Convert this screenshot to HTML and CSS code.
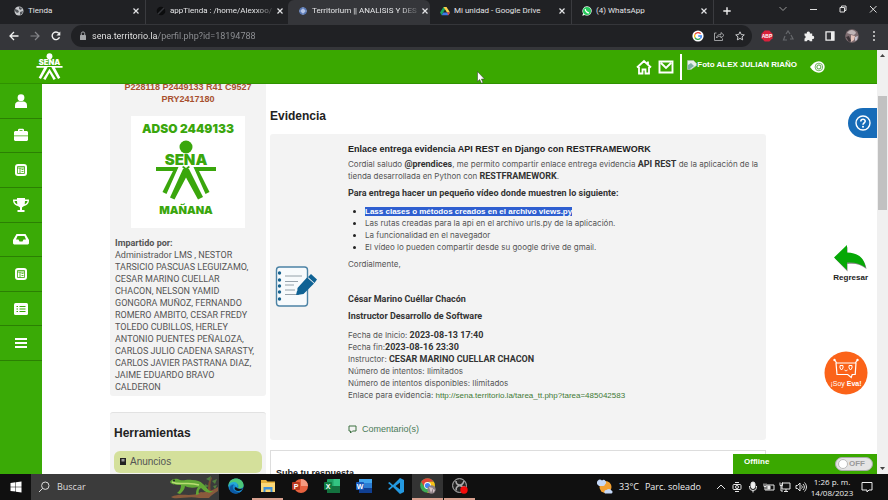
FILE: index.html
```html
<!DOCTYPE html>
<html lang="es">
<head>
<meta charset="utf-8">
<title>Territorium || ANALISIS Y DESARROLLO</title>
<link rel="stylesheet" href="styles.css">
</head>
<body>
<svg class="defs" aria-hidden="true">
  <symbol id="x" viewBox="0 0 8 8"><path d="M1.5 1.5l5 5M6.500 1.500l-5 5" stroke="currentColor" stroke-width="1.200" fill="none"/></symbol>
  <symbol id="news" viewBox="0 0 12 12"><rect width="12" height="12" rx="3" fill="#fff"/><path d="M2.500 2.500h7v7h-7zM2.500 4h7M5 4v5.500M6.500 5.500h2M6.500 7.500h2" fill="none" stroke="#3aaa06" stroke-width=".8"/></symbol>
</svg>

<header class="tabs">
  <div class="tab">
    <svg class="fav" viewBox="0 0 10 10"><circle cx="5" cy="5" r="4.500" fill="#c6c8cb"/><path d="M1 3l3 1 1 2-2 1-2-2zM5 1l3 1-1 2-2-1zM6 6l3-1-1 3-2 1z" fill="#55585d"/></svg>
    <span class="tab-name">Tienda</span>
    <button class="shut" aria-label="Cerrar"><svg viewBox="0 0 8 8"><use href="#x"/></svg></button>
  </div>
  <div class="tab">
    <svg class="fav" viewBox="0 0 10 10"><circle cx="5" cy="5" r="4.300" fill="#0c0d0e"/><path d="M2 8L8 2" stroke="#35373b" stroke-width="1.500"/></svg>
    <span class="tab-name fade">appTienda : /home/Alexxoo/</span>
    <button class="shut" aria-label="Cerrar"><svg viewBox="0 0 8 8"><use href="#x"/></svg></button>
  </div>
  <div class="tab on">
    <svg class="fav" viewBox="0 0 10 10"><circle cx="5" cy="5" r="3.800" fill="#5878b4"/><circle cx="5" cy="5" r="2" fill="#c9d6f2"/><path d="M1 5h8M5 1v8" stroke="#a9bce2" stroke-width=".7"/></svg>
    <span class="tab-name fade">Territorium || ANALISIS Y DES</span>
    <button class="shut" aria-label="Cerrar"><svg viewBox="0 0 8 8"><use href="#x"/></svg></button>
  </div>
  <div class="tab">
    <svg class="fav" viewBox="0 0 10 10"><path d="M3.500 1h3L3.200 6.500 1.700 9.200 0 6.500z" fill="#1aa260"/><path d="M3.500 1h3L10 6.500H7z" fill="#ffcf48"/><path d="M3.200 6.500H10L8.300 9.200H1.700z" fill="#3b78e7"/><path d="M7 6.500h3L8.300 9.200z" fill="#ea4335"/></svg>
    <span class="tab-name">Mi unidad - Google Drive</span>
    <button class="shut" aria-label="Cerrar"><svg viewBox="0 0 8 8"><use href="#x"/></svg></button>
  </div>
  <div class="tab">
    <svg class="fav" viewBox="0 0 12 12"><path d="M6 .3a5.600 5.600 0 1 1-2.700 10.500L.4 11.700l.9-2.900A5.600 5.600 0 0 1 6 .3z" fill="#fff"/><circle cx="6" cy="6" r="4.800" fill="#25c85a"/><path d="M4 3.500c-.6 1.800 2.200 5 4.500 4.700" stroke="#fff" stroke-width="1.500" fill="none"/></svg>
    <span class="tab-name">(4) WhatsApp</span>
    <button class="shut" aria-label="Cerrar"><svg viewBox="0 0 8 8"><use href="#x"/></svg></button>
  </div>
  <button class="new" aria-label="Nueva pestaña"><svg viewBox="0 0 8 8"><path d="M4 .3v7.400M.3 4h7.400" stroke="#eee" stroke-width="1.400"/></svg></button>
  <div class="win">
    <button aria-label="Buscar pestañas"><svg viewBox="0 0 10 10"><path d="M1.500 3l3.500 3.500L8.500 3" stroke="#999" fill="none"/></svg></button>
    <button aria-label="Minimizar"><svg viewBox="0 0 10 10"><path d="M2 5.500h7" stroke="#ddd"/></svg></button>
    <button aria-label="Restaurar"><svg viewBox="0 0 10 10"><path d="M2 3.500h4.500V8H2zM3.500 3.500V2H8v4.500H6.500" stroke="#ddd" fill="none"/></svg></button>
    <button aria-label="Cerrar ventana"><svg viewBox="0 0 10 10"><path d="M2 2l6.500 6.500M8.500 2L2 8.500" stroke="#ddd" fill="none"/></svg></button>
  </div>
</header>

<div class="toolbar">
  <button aria-label="Atrás"><svg viewBox="0 0 10 10"><path d="M9.500 5H1M5 1L1 5l4 4" stroke="#f1f1f1" stroke-width="1.300" fill="none"/></svg></button>
  <button aria-label="Adelante"><svg viewBox="0 0 10 10"><path d="M.5 5H9M5 1l4 4-4 4" stroke="#85868a" stroke-width="1.200" fill="none"/></svg></button>
  <button aria-label="Recargar"><svg viewBox="0 0 10 10"><path d="M8.500 6.200A3.800 3.800 0 1 1 7.800 2.300" stroke="#f1f1f1" stroke-width="1.400" fill="none"/><path d="M9.300.4v4H5.400z" fill="#f1f1f1"/></svg></button>
  <div class="address">
    <svg class="lock" viewBox="0 0 8 10"><rect x="1" y="4" width="6" height="5" rx=".6" fill="#a4a6a9"/><path d="M2.300 4V2.600a1.700 1.700 0 0 1 3.400 0V4" fill="none" stroke="#a4a6a9"/></svg>
    <input type="text" aria-label="Dirección" value="sena.territorio.la/perfil.php?id=18194788">
    <button aria-label="Buscar con Google"><svg viewBox="0 0 12 12"><circle cx="6" cy="6" r="5.600" fill="#fff"/><path d="M8.600 3.700A3.400 3.400 0 0 0 3 4.400" stroke="#ea4335" stroke-width="1.300" fill="none"/><path d="M3 4.400a3.400 3.400 0 0 0 0 3.200" stroke="#fbbc05" stroke-width="1.300" fill="none"/><path d="M3 7.600a3.400 3.400 0 0 0 5.300.9" stroke="#34a853" stroke-width="1.300" fill="none"/><path d="M8.300 8.500A3.400 3.400 0 0 0 9.400 6H6.200" stroke="#4285f4" stroke-width="1.300" fill="none"/></svg></button>
    <button aria-label="Compartir"><svg viewBox="0 0 12 12"><path d="M3.500 3H1.500v7.500h8V8.500M3.500 8c.3-2.600 2-3.600 4.500-3.600V2.500L11 5.300 8 8V6.200C6 6.200 4.500 6.600 3.500 8z" stroke="#aaabae" stroke-width=".9" fill="none"/></svg></button>
    <button aria-label="Favorito"><svg viewBox="0 0 12 12"><path d="M6 1.800l1.300 2.800 3 .3-2.300 2 .7 3L6 8.400 3.300 9.900l.7-3-2.300-2 3-.3z" stroke="#c9cacc" fill="none"/></svg></button>
  </div>
  <div class="exts">
    <button aria-label="Adblock Plus"><svg viewBox="0 0 12 12"><path d="M3.700.6h4.600l3.200 3.200v4.500l-3.200 3.200H3.700L.5 8.300V3.800z" fill="#d9213c"/><text x="6" y="7.700" class="abp">ABP</text></svg></button>
    <button aria-label="Extensión"><svg viewBox="0 0 12 12"><path d="M4 4l2-3 2 3M9 5l2 4H8M5 10H1.500L3 6" stroke="#66686c" stroke-width="1.200" fill="none"/></svg></button>
    <button aria-label="Extensiones"><svg viewBox="0 0 12 12"><path d="M1.500 3.500h2.300a1.600 1.600 0 1 1 3.100 0h2.300v2.400a1.600 1.600 0 1 1 0 3.100v2.200H6.800a1.500 1.500 0 0 0-2.900 0H1.500V8.500a1.500 1.500 0 0 0 0-2.900z" fill="#eee"/></svg></button>
    <button aria-label="Panel lateral"><svg viewBox="0 0 12 12"><path d="M2 1.800h8v8.400H2z" fill="none" stroke="#eee" stroke-width="1.300"/><path d="M7 1.800h3v8.400H7z" fill="#eee"/></svg></button>
    <button aria-label="Perfil"><svg class="big" viewBox="0 0 14 14"><circle cx="7" cy="7" r="6.800" fill="#7d6c70"/><path d="M2 4c3-5 8-3 9 0L9 6 5 5z" fill="#bfb4b6"/><path d="M6 6l4 1-1 4-3 2z" fill="#e5c4bb"/><path d="M1 8l3-1 2 5-2 1z" fill="#3c3438"/><path d="M10 8l3-1-1 4-2 1z" fill="#c6c3d0"/></svg></button>
    <button aria-label="Menú"><svg viewBox="0 0 12 12" fill="#ddd"><circle cx="6" cy="2" r="1"/><circle cx="6" cy="6" r="1"/><circle cx="6" cy="10" r="1"/></svg></button>
  </div>
</div>

<div class="view">
  <div class="site">
    <header class="top">
      <a class="brand" href="#" aria-label="SENA"><svg viewBox="0 0 60 60" fill="#fff"><circle cx="30" cy="7" r="6.500"/><text x="30" y="27" class="logo-word">SENA</text><path d="M1 29h58v4H42l12 22-5 3-15-27h-8L11 58l-5-3 12-22H1zM30 35l14 22-5 3-9-16-9 16-5-3z"/></svg></a>
      <nav class="user">
        <a href="#" aria-label="Inicio"><svg viewBox="0 0 16 16"><path d="M1 8.500L8 2l7 6.500M3 8v6.500h3.500v-4h3v4H13V8M12 2.500v3" fill="none" stroke="#fff" stroke-width="1.800"/></svg></a>
        <a href="#" aria-label="Correo"><svg viewBox="0 0 16 16"><path d="M1.500 2.500h13v11h-13zM3 4l5 5 5-5" fill="none" stroke="#fff" stroke-width="1.900"/></svg></a>
        <a class="name" href="#"><svg viewBox="0 0 10 10"><path d="M.5.500h6l3 3v2L4 9.500H.5z" fill="#e8f0ea" stroke="#a9b8ac" stroke-width=".6"/><path d="M1 5l3-2 3 3-4 3H1z" fill="#7db0a4"/></svg>Foto ALEX JULIAN RIAÑO</a>
        <a class="eye" href="#" aria-label="Accesibilidad"><svg viewBox="0 0 18 14"><path d="M0 7c3-4 6-6.500 10-6.500A6.500 6.500 0 0 1 10 13.500C6 13.500 3 11 0 7z" fill="#fff"/><circle cx="10" cy="7" r="4.300" fill="none" stroke="#3a9a20" stroke-width=".8"/><circle cx="10" cy="7" r="2.300" fill="none" stroke="#3a9a20"/></svg></a>
      </nav>
    </header>

    <div class="body">
      <nav class="side">
        <div class="side-list">
          <a href="#" aria-label="Perfil"><svg viewBox="0 0 14 14" fill="#fff"><circle cx="7" cy="3.700" r="3.400"/><path d="M1 14v-2.500c0-3 2-4 3.500-4h5c1.500 0 3.500 1 3.500 4V14z"/></svg></a>
          <a href="#" aria-label="Maletín"><svg viewBox="0 0 14 14" fill="#fff"><path d="M4 3V1.500L5 .8h4l1 .7V3h3l1 1v3.500H0V4l1-1zM5.500 3h3v-.8h-3zM0 8.300h14V12l-1 1H1l-1-1z"/></svg></a>
          <a href="#" aria-label="Noticias"><svg class="sm" viewBox="0 0 12 12"><use href="#news"/></svg></a>
          <a href="#" aria-label="Logros"><svg class="lg" viewBox="0 0 16 14" fill="#fff"><path d="M4 0h8v1.500h4c0 4-2 6-5 6.500L9 9.500V12h2.500v2h-7v-2H7V9.500L5 8C2 7.500 0 5.500 0 1.500h4zM1.500 3c.3 1.700 1.200 2.800 2.800 3.200L4 3zM14.500 3H12l-.3 3.200C13.300 5.800 14.200 4.700 14.500 3z"/></svg></a>
          <a href="#" aria-label="Bandeja"><svg class="lg" viewBox="0 0 16 12" fill="#fff"><path d="M3.500 1h9L16 7v3.500l-1 1H1l-1-1V7zM4.500 3L3 6.500h2.500l1 2h3l1-2H13L11.500 3z"/></svg></a>
          <a href="#" aria-label="Cursos"><svg class="sm" viewBox="0 0 12 12"><use href="#news"/></svg></a>
          <a href="#" aria-label="Lista"><svg viewBox="0 0 14 12"><rect width="14" height="12" rx="1.500" fill="#fff"/><path d="M2.500 3.500H4M5.500 3.500h6M2.500 6H4M5.500 6h6M2.500 8.500H4M5.500 8.500h6" stroke="#3aaa06"/></svg></a>
          <a href="#" aria-label="Menú"><svg class="sm" viewBox="0 0 12 12"><path d="M0 2h12M0 6h12M0 10h12" stroke="#fff" stroke-width="2.200"/></svg></a>
        </div>
      </nav>

      <div class="content">
        <aside class="col">
          <section class="card course">
            <p class="code">P228118 P2449133 R41 C9527<br>PRY2417180</p>
            <svg class="badge" viewBox="0 0 114 112" fill="#3aa60c">
              <rect width="114" height="112" fill="#fff"/>
              <text x="57" y="17" class="badge-text wide">ADSO 2449133</text>
              <circle cx="55" cy="31" r="6.500"/>
              <text x="55" y="49" class="badge-sena">SENA</text>
              <path d="M25 51h22.500l-12 27-4-2L42 55H25zM62.500 51H85v4H68l10.500 21-4 2zM55 55l-4-4 1.500-1 2.500 2 2.500-2 1.500 1zM52 53h6l14 28-5 2.500-12-22-11.500 22-4.500-2z"/>
              <text x="55" y="98" class="badge-text">MAÑANA</text>
            </svg>
            <p class="people"><b>Impartido por:</b><br>Administrador LMS , NESTOR<br>TARSICIO PASCUAS LEGUIZAMO,<br>CESAR MARINO CUELLAR<br>CHACON, NELSON YAMID<br>GONGORA MUÑOZ, FERNANDO<br>ROMERO AMBITO, CESAR FREDY<br>TOLEDO CUBILLOS, HERLEY<br>ANTONIO PUENTES PEÑALOZA,<br>CARLOS JULIO CADENA SARASTY,<br>CARLOS JAVIER PASTRANA DIAZ,<br>JAIME EDUARDO BRAVO<br>CALDERON</p>
          </section>
          <section class="card tools">
            <h2>Herramientas</h2>
            <a class="tool" href="#"><svg viewBox="0 0 8 10"><path d="M1 1h6v7H1z" fill="#222"/><path d="M2.500 2h3v2.500h-3z" fill="#999"/></svg>Anuncios</a>
          </section>
        </aside>

        <main class="col">
          <h2 class="heading">Evidencia</h2>
          <article class="card task">
            <svg class="pad" viewBox="0 0 42 42">
              <rect x="1.500" y="1" width="31" height="39" rx="3" fill="#f7fafc" stroke="#4c83a5" stroke-width="1.400"/>
              <g fill="#17618d"><circle cx="4.500" cy="7" r="1.700"/><circle cx="4.500" cy="14" r="1.700"/><circle cx="4.500" cy="20" r="1.700"/><circle cx="4.500" cy="26" r="1.700"/><circle cx="4.500" cy="33" r="1.700"/></g>
              <path d="M10 10h17M10 15.500h13M10 19h9M10 24h10M10 28.500h14" stroke="#7c8b96" stroke-width=".8"/>
              <path d="M36 8l6 5.500-2.500 3.500-6.500-6zM32 11.500l7 6L28.500 28l-6.500 1 .5-7zM21 29l1-4 3 3z" fill="#0f6294"/>
            </svg>
            <div class="text">
              <h3>Enlace entrega evidencia API REST en Django con RESTFRAMEWORK</h3>
              <p>Cordial saludo <b>@prendices</b>, me permito compartir enlace entrega evidencia <b>API REST</b> de la aplicación de la<br>tienda desarrollada en Python con <b>RESTFRAMEWORK</b>.</p>
              <p><b>Para entrega hacer un pequeño vídeo donde muestren lo siguiente:</b></p>
              <ul>
                <li><mark>Lass clases o métodos creados en el archivo views.py</mark></li>
                <li>Las rutas creadas para la api en el archivo urls.py de la aplicación.</li>
                <li>La funcionalidad en el navegador</li>
                <li>El vídeo lo pueden compartir desde su google drive de gmail.</li>
              </ul>
              <p>Cordialmente,</p>
              <p class="sign"><b>César Marino Cuéllar Chacón</b></p>
              <p><b>Instructor Desarrollo de Software</b></p>
              <div class="facts">
                <div>Fecha de Inicio: <b>2023-08-13 17:40</b></div>
                <div>Fecha fin:<b>2023-08-16 23:30</b></div>
                <div>Instructor: <b>CESAR MARINO CUELLAR CHACON</b></div>
                <div>Número de intentos: Ilimitados</div>
                <div>Número de intentos disponibles: Ilimitados</div>
                <div>Enlace para evidencia: <a href="#">http://sena.territorio.la/tarea_tt.php?tarea=485042583</a></div>
              </div>
              <a class="comments" href="#"><svg viewBox="0 0 9 9"><path d="M1 1h7v5H4.500L2.500 8V6H1z" fill="none" stroke="#3c7040"/></svg>Comentario(s)</a>
            </div>
          </article>
          <section class="answer"><h3>Sube tu respuesta</h3></section>
        </main>
      </div>
    </div>

    <button class="help" aria-label="Ayuda"><svg viewBox="0 0 16 16"><circle cx="8" cy="8" r="7" fill="none" stroke="#fff" stroke-width="1.400"/><path d="M5.800 6.500C5.800 3.400 10.300 3.600 10.200 6.300 10.100 7.800 8 8 8 9.800" fill="none" stroke="#fff" stroke-width="1.600"/><circle cx="8" cy="11.800" r="1" fill="#fff"/></svg></button>
    <a class="back" href="#"><svg viewBox="0 0 34 28"><path d="M2 14.500L14.500 3v6.500C25 9.500 32 15 33.500 25 28 20.500 22 19 14.500 20v7.500z" fill="#888"/><path d="M1 13.500L14 1v7.500C24.500 8.500 31.500 14 32.500 23.500 27 19.500 21.500 18 14 18.500V26z" fill="#06a806"/></svg>Regresar</a>
    <button class="eva" aria-label="Soy Eva"><svg viewBox="0 0 44 44"><circle cx="22" cy="22" r="21.500" fill="#fb6319"/><path d="M12.500 11.500L10.500 9M31.500 11.500L33.500 9M12 12h20l-.8 11.500h-3l-1 3-3.500-3H13z" fill="none" stroke="#fff" stroke-width="1.200"/><circle cx="10.500" cy="9" r="1.200" fill="#fff"/><circle cx="33.500" cy="9" r="1.200" fill="#fff"/><path d="M16 14.500h3v2.500l-1.500 2L16 17zM25 14.500h3v2.500l-1.500 2L25 17zM20.500 19c.8 1 2.200 1 3 0" fill="none" stroke="#fff"/><text x="22" y="35" class="eva-text">¡Soy <tspan class="eva-bold">Eva!</tspan></text></svg></button>
    <div class="chat"><span>Offline</span><label class="switch"><input type="checkbox" aria-label="Chat"><span>OFF</span></label></div>
  </div>
  <div class="scroll" aria-hidden="true">
    <svg viewBox="0 0 11 11"><path d="M3 7l2.500-3L8 7z" fill="#444"/></svg>
    <div class="thumb"></div>
    <svg class="down" viewBox="0 0 11 11"><path d="M3 4l2.500 3L8 4z" fill="#444"/></svg>
  </div>
</div>

<footer class="taskbar">
  <button class="start" aria-label="Inicio"><svg viewBox="0 0 12 12" fill="#fff"><path d="M.5 2L5.500 1.300v4.400h-5zM6 1.200L11.500.4v5.300H6zM.5 6.200h5v4.400l-5-.7zM6 6.200h5.500v5.300L6 10.700z"/></svg></button>
  <div class="search">
    <svg class="glass" viewBox="0 0 12 12"><circle cx="7.300" cy="4.700" r="3.700" fill="none" stroke="#ddd"/><path d="M4.600 7.400L1 11" stroke="#ddd"/></svg>
    <input type="search" aria-label="Buscar" placeholder="Buscar">
    <svg class="gecko" viewBox="0 0 50 24">
      <path d="M2 22c10-5 20 1 30-5 6 1 12-2 17-5v4c-3 2-7 4-9 7H30c-10-2-18 1-26 0z" fill="#8a5a3c"/><path d="M38 18c2-6 0-10 4-16l1 1c-2 5-2 9-1 14z" fill="#7a4c32"/>
      <path d="M37 4l5-3-1 5zM43 6l5-2-2 5zM36 9l4 2-4 2zM44 11l4-1-2 4z" fill="#4f7d3f"/>
      <path d="M1 7c2-4 7-4 10-2 4 1 7-1 12 0 5 0 8 1 11 4 4 3 5 8 10 7-4 4-9 0-12-3-2 1-3 3-2 6l-3 1c0-3 0-5 2-8-4 1-10 1-13-1 0 3-2 5-5 8l-3-1c3-2 4-5 4-8C7 10 3 10 1 7z" fill="#62a836"/><path d="M3 7c8 4 16-1 27 3" fill="none" stroke="#b9dc73" stroke-width="1.500"/><circle cx="5" cy="5.500" r="1" fill="#222"/>
    </svg>
  </div>
  <div class="apps">
    <button aria-label="Edge"><svg viewBox="0 0 16 16"><circle cx="8" cy="8" r="7.600" fill="#1689cf"/><path d="M.4 7C1.500-2 15-1.500 15.600 7c.2 3-3.500 4.500-6 3 2-1.500.5-5-3-5C4 5 1.500 6 .4 9z" fill="#4cc779"/><path d="M.4 8.500C1 4.500 4 3.500 6.500 4 10 4.500 10 8 8.500 9.500 7.500 5.500 3 5 .4 8.500z" fill="#25a8d8"/><path d="M6 6.500C3 9 6 15 12 14c-5 4-12 0-10-5 .8-1.500 2.500-2.500 4-2.500z" fill="#0c59a4"/><path d="M8.500 9.500c2 2 5 1.500 6.500.5-1 2.500-5 4-7.500 2C6 10.500 6.500 8.500 8.500 9.500z" fill="#121212"/></svg></button>
    <button class="open" aria-label="Explorador"><svg viewBox="0 0 16 16"><path d="M1 2h5l1.500 1.500H15V14H1z" fill="#e8b33c"/><path d="M1 5h14v9H1z" fill="#fbd877"/><path d="M3.500 9h9v5h-2v-2.500h-5V14h-2z" fill="#3f91d8"/></svg></button>
    <button aria-label="PowerPoint"><svg viewBox="0 0 16 16"><circle cx="9" cy="8" r="7" fill="#e8623f"/><path d="M9 1a7 7 0 0 1 7 7H9z" fill="#f79b80"/><rect y="4" width="8" height="8" rx="1" fill="#b9371e"/><text x="4" y="10.500" class="app-letter">P</text></svg></button>
    <button aria-label="Excel"><svg viewBox="0 0 16 16"><rect x="3" y="1" width="13" height="14" rx="1" fill="#21a366"/><path d="M9.500 1H16v7H9.500z" fill="#33c481"/><path d="M3 8h13v7H3z" fill="#14723f"/><rect y="4" width="8" height="8" rx="1" fill="#107c41"/><text x="4" y="10.500" class="app-letter">X</text></svg></button>
    <button aria-label="Word"><svg viewBox="0 0 16 16"><rect x="3" y="1" width="13" height="14" rx="1" fill="#2b7cd3"/><path d="M3 1h13v4H3z" fill="#41a5ee"/><path d="M3 10h13v5H3z" fill="#103f91"/><rect y="4" width="8" height="8" rx="1" fill="#185abd"/><text x="4" y="10.500" class="app-letter">W</text></svg></button>
    <button aria-label="Visual Studio Code"><svg viewBox="0 0 16 16"><path d="M12 0l4 2v12l-4 2-7-7-3.500 3L0 11l3.500-3L0 5l1.500-1L5 7zM12 4.500L7.500 8l4.500 3.500z" fill="#2499e0"/></svg></button>
    <button class="open active" aria-label="Chrome"><svg viewBox="0 0 16 16"><circle cx="7.500" cy="7.500" r="7.300" fill="#3cab55"/><path d="M1.200 3.800a7.300 7.300 0 0 1 12.600 0H7.500L4.500 9z" fill="#e44436"/><path d="M13.800 3.800a7.300 7.300 0 0 1-6.500 11L10.500 9l-1-5.200z" fill="#fbc116"/><circle cx="7.500" cy="7.500" r="3.400" fill="#fff"/><circle cx="7.500" cy="7.500" r="2.600" fill="#4285f4"/><circle cx="11.500" cy="11.500" r="4.200" fill="#8d8085"/><path d="M9 9l4 1-2 5zM13 11l2 1-2 3z" fill="#d6c6ca"/></svg></button>
    <button class="open" aria-label="OBS Studio"><svg viewBox="0 0 16 16"><circle cx="7.500" cy="7.500" r="6.900" fill="#222" stroke="#bbb"/><path d="M4 3c0 4 3 4 4 4s3-1 4-4M7.500 7.500c-3 1-4 3-3 5M8 7.500c2 1 3 2 5 1" fill="none" stroke="#aaa" stroke-width="1.600"/><circle cx="12" cy="12" r="3.700" fill="#f40b0b"/></svg></button>
  </div>
  <div class="weather"><svg viewBox="0 0 16 16"><circle cx="8.500" cy="8" r="6" fill="#f3a132"/><path d="M1 6a2.500 2.500 0 0 1 4-4.500A2.500 2.500 0 0 1 8 5.500 2 2 0 0 1 6 7H2zM8 14.500a2 2 0 0 1 1.500-3.500 3 3 0 0 1 5 .5 1.600 1.600 0 0 1 0 3z" fill="#c5d8f7"/></svg><span>33°C</span><span>Parc. soleado</span></div>
  <div class="tray">
    <svg viewBox="0 0 12 12"><path d="M2 8l4-4 4 4"/></svg>
    <svg viewBox="0 0 12 12"><rect x="2" y="3.500" width="8" height="5" rx="1"/><circle cx="6" cy="6" r="1.500"/><path d="M4 1.500h4M4 10.500h4"/></svg>
    <svg viewBox="0 0 12 12"><rect x="4" y="1" width="4" height="6.500" rx="2" fill="#eee"/><path d="M2.500 5v1.500a3.500 3 0 0 0 7 0V5M6 9.500v2" /></svg>
    <svg viewBox="0 0 12 12"><path d="M4 4h7v5H4zM1 2.500v3h2v-3M2 5.500V9h2"/><path d="M5 5h2v3H5z" fill="#eee"/></svg>
    <svg viewBox="0 0 12 12"><path d="M3 2h8v6H3zM5 10.500h4M7 8v2.500M1 1.500v3h2.500v-3M2 5v5h2"/></svg>
    <svg viewBox="0 0 12 12"><path d="M1 4.500h1.500L5 2v8L2.500 7.500H1zM6.500 4.500c1 1 1 2 0 3M8 3c1.800 2 1.800 4 0 6M9.500 1.500c2.600 3 2.600 6 0 9"/></svg>
  </div>
  <div class="clock">1:26 p. m.<br>14/08/2023</div>
  <button class="notes" aria-label="Notificaciones"><svg viewBox="0 0 12 12"><path d="M1 1.500h10v7.500H8L6 11 6 9H1z" fill="none" stroke="#eee"/></svg></button>
</footer>

<svg class="cursor" viewBox="0 0 8 13" aria-hidden="true"><path d="M.5.500v10l2.200-2 1.700 3.800 1.600-.8L4.400 8h3.100z" fill="#fff" stroke="#333" stroke-width=".5"/></svg>
</body>
</html>
```
FILE: styles.css
```css
* { box-sizing: border-box; }

body {
  margin: 0;
  height: 100vh;
  display: flex;
  flex-direction: column;
  overflow: hidden;
  background: #fff;
  color: #555;
  font: 9px/12px Roboto, "Liberation Sans", sans-serif;
}

button {
  display: grid;
  place-items: center;
  padding: 0;
  border: 0;
  background: none;
  color: inherit;
  font: inherit;
}

svg { display: block; flex: none; }
a { color: inherit; text-decoration: none; }
h2, h3, p, ul { margin: 0; }
input { min-width: 0; border: 0; padding: 0; font: inherit; }

.defs { position: absolute; width: 0; height: 0; }

/* Browser tabs */
.tabs {
  display: flex;
  flex: none;
  height: 24px;
  padding-left: 4px;
  background: #202124;
  color: #e4e5e7;
  font: 8px/12px Roboto, sans-serif;
}

.tab {
  display: flex;
  align-items: center;
  width: 142px;
  gap: 4px;
  padding: 0 5px 2px 10px;
  border-right: 1px solid #3a3b3f;
}

.tab.on { background: #35363a; border-radius: 6px 6px 0 0; }
.tab:nth-child(2), .tab.on { border-color: transparent; }
.fav { width: 10px; height: 10px; }
.tab-name { flex: 1; white-space: nowrap; }
.fade { mask-image: linear-gradient(90deg, #000 84%, rgb(0 0 0 / .2)); }
.shut svg { width: 8px; height: 8px; }
.new { width: 26px; height: 22px; }
.new svg { width: 8px; height: 8px; }
.win { display: flex; gap: 20px; margin-left: auto; padding: 0 10px 6px 0; }
.win svg { width: 10px; height: 10px; }

/* Address row */
.toolbar {
  display: flex;
  align-items: center;
  flex: none;
  height: 26px;
  padding: 0 12px 2px 8px;
  gap: 9px;
  background: #35363a;
  color: #9a9ca0;
}

.toolbar > button { width: 12px; }
.toolbar > button svg { width: 10px; height: 10px; }

.address {
  display: flex;
  flex: 1;
  align-items: center;
  height: 22px;
  gap: 9px;
  padding: 0 6px 0 8px;
  border-radius: 11px;
  background: #202124;
}

.address input {
  flex: 1;
  margin-left: -4px;
  color: transparent;
  background: linear-gradient(90deg, #f0f0f0 66px, #929498 66px);
  background-clip: text;
  -webkit-background-clip: text;
}

.address svg { width: 12px; height: 12px; }
.address .lock { width: 8px; height: 10px; }
.exts { display: flex; align-items: center; gap: 9px; }
.exts svg { width: 12px; height: 12px; }
.exts .big { width: 14px; height: 14px; }
.exts button:last-child { width: 8px; }
.abp { font: 700 5px "Liberation Sans", sans-serif; fill: #fff; text-anchor: middle; }

/* Page viewport */
.view { display: flex; flex: 1; min-height: 0; }
.site { position: relative; display: flex; flex: 1; flex-direction: column; min-width: 0; overflow: hidden; }

.scroll { display: flex; flex-direction: column; width: 11px; background: #f0f0f0; }
.scroll svg { width: 11px; height: 11px; }
.thumb { height: 114px; margin: 35px 1px 0; background: #c1c1c1; }
.scroll .down { margin-top: auto; }

.top {
  display: flex;
  flex: none;
  align-items: center;
  justify-content: space-between;
  height: 34px;
  padding: 0 51px 0 36px;
  border-bottom: 1px solid #2f9200;
  background: #3aa800;
}

.brand svg { width: 27px; height: 27px; }
.logo-word { font: 900 17px Inter, sans-serif; text-anchor: middle; }
.user { display: flex; align-items: center; gap: 6px; color: #fff; }
.user svg { width: 16px; height: 16px; }
.name {
  display: flex;
  align-items: center;
  height: 26px;
  padding: 0 0 4px 5px;
  border-left: 2px solid #fff;
  font: 700 8px/12px "Liberation Sans", sans-serif;
}
.user .name svg { width: 10px; height: 10px; }
.eye { margin-left: 7px; }

.body { display: flex; flex: 1; min-height: 0; }
.side { flex: none; width: 42px; background: #3aaa06; }
.side-list { display: flex; flex-direction: column; height: 277px; }
.side a { display: grid; flex: 1; place-items: center; border-bottom: 1px solid #2b8003; }
.side svg { width: 14px; height: 14px; }
.side .sm { width: 12px; height: 12px; }
.side .lg { width: 16px; }

.content {
  display: grid;
  flex: 1;
  grid-template-columns: 156px minmax(0, 1fr);
  gap: 4px;
  padding: 0 111px 0 68px;
  overflow: hidden;
}

.col { min-width: 0; }
.card { background: #f3f3f3; border-radius: 3px; }

/* Course card */
.course { margin-top: -3px; padding-bottom: 3px; }
.code { color: #a8502f; font: 700 9px/12px "Liberation Sans", sans-serif; text-align: center; }
.badge { width: 114px; height: 112px; margin: 11px auto 9px; }
.badge-text { font: 900 11px Inter, sans-serif; text-anchor: middle; }
.badge-text.wide { font-size: 12px; }
.badge-sena { font: 900 15px Inter, sans-serif; text-anchor: middle; }
.people { padding-left: 5px; white-space: nowrap; }

.tools { margin-top: 16px; padding: 12px 4px 40px; border-top: 1px solid #e2e2e2; }
h2 { color: #222; font: 700 12px/16px "Liberation Sans", sans-serif; }
.tool {
  display: flex;
  align-items: center;
  height: 22px;
  gap: 3px;
  margin-top: 10px;
  padding: 0 5px;
  border-radius: 6px;
  background: #d4e09b;
  font: 10px/12px "Liberation Sans", sans-serif;
}
.tool svg { width: 8px; height: 10px; }

/* Evidence */
.heading { margin: 24px 0 10px; }
.task { display: flex; align-items: center; height: 306px; padding-left: 5px; gap: 31px; }
.pad { width: 42px; height: 42px; }
.text { align-self: start; padding-top: 9px; white-space: nowrap; font: 8px/12px Inter, sans-serif; }
h3 { color: #222; font: 700 9px/12px "Liberation Sans", sans-serif; }
.text p { margin-top: 5px; }
.text h3 + p { margin-top: 3px; }
.text b { color: #333; font: 700 9px/12px Roboto, sans-serif; }
.text ul { margin: 6px 0 4px; padding-left: 17px; }
.text li { height: 12px; }
.text li::marker { color: #222; }
mark { background: #2f5fd0; color: #fff; font: 700 8px/12px "Liberation Sans", sans-serif; }
.text .sign { margin-top: 23px; }
.facts { margin-top: 7px; }
.facts a { color: #3f7a35; font: 8px/12px "Liberation Sans", sans-serif; }
.comments {
  display: flex;
  align-items: center;
  gap: 5px;
  margin-top: 20px;
  color: #4b7a58;
  font: 9px/14px "Liberation Sans", sans-serif;
}
.comments svg { width: 9px; height: 9px; }
.answer { margin-top: 10px; padding: 16px 5px 40px; border: 1px solid #ddd; }

/* Floating controls */
.help {
  position: absolute;
  top: 58px;
  right: 0;
  width: 29px;
  height: 30px;
  border-radius: 15px 0 0 15px;
  background: #176cb8;
}
.help svg { width: 16px; height: 16px; }
.back {
  position: absolute;
  top: 194px;
  right: 9px;
  display: grid;
  color: #222;
  font: 700 8px/12px "Liberation Sans", sans-serif;
}
.back svg { width: 34px; height: 28px; }
.eva { position: absolute; top: 301px; right: 9px; }
.eva svg { width: 44px; height: 44px; }
.eva-text { font: 7px "Liberation Sans", sans-serif; fill: #fff; text-anchor: middle; }
.eva-bold { font-weight: 700; }

.chat {
  position: absolute;
  right: 0;
  bottom: 0;
  display: flex;
  justify-content: space-between;
  width: 144px;
  height: 20px;
  padding: 3px 4px 3px 11px;
  background: #3aa800;
  color: #fff;
  font: 700 8px/10px "Liberation Sans", sans-serif;
}
.switch {
  display: flex;
  align-items: center;
  width: 38px;
  height: 14px;
  gap: 1px;
  padding: 0 2px;
  border-radius: 7px;
  background: #e4e4e4;
  border: 1px solid #aaa;
  color: #999;
}
.switch input { appearance: none; width: 10px; height: 10px; margin: 0; border: 1px solid #bbb; border-radius: 50%; background: #fff; }

/* Taskbar */
.taskbar {
  display: flex;
  flex: none;
  align-items: center;
  height: 26px;
  background: #101010;
  color: #eee;
  font: 9px/12px "Open Sans", "Noto Sans", sans-serif;
}
.start { width: 31px; height: 26px; }
.start svg { width: 12px; height: 12px; }
.search { display: flex; align-items: center; width: 188px; height: 26px; gap: 7px; padding-left: 7px; background: #3b3b3b; }
.search input { flex: 1; background: none; color: #eee; }
.search input::placeholder { color: #ddd; opacity: 1; }
.glass { width: 12px; height: 12px; }
.gecko { width: 50px; height: 24px; }
.apps { display: flex; margin-left: 1px; gap: 1px; }
.apps button { width: 31px; height: 26px; border-bottom: 2px solid transparent; }
.apps .open { border-color: #d8a08f; background-clip: padding-box; }
.apps .active { background-color: #333; }
.apps svg { width: 16px; height: 16px; }
.app-letter { font: 700 7px "Liberation Sans", sans-serif; fill: #fff; text-anchor: middle; }
.weather { display: flex; align-items: center; gap: 6px; margin-left: auto; }
.weather svg { width: 16px; height: 16px; }
.tray { display: flex; gap: 4px; margin-left: 14px; }
.tray svg { width: 12px; height: 12px; fill: none; stroke: #e6e6e6; }
.clock { width: 50px; text-align: center; font-size: 8px; line-height: 11px; }
.notes { margin: 0 15px 0 4px; }
.notes svg { width: 12px; height: 12px; }

.cursor { position: absolute; left: 477px; top: 71px; width: 8px; height: 13px; }
```
